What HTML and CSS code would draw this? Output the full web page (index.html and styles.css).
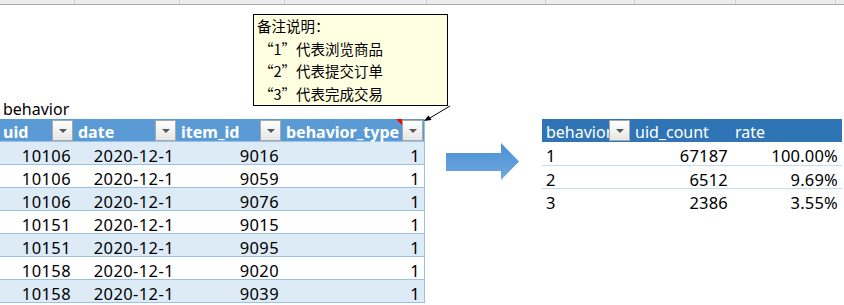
FILE: index.html
```html
<!DOCTYPE html>
<html lang="zh-CN">
<head>
<meta charset="utf-8">
<link rel="stylesheet" href="styles.css">
</head>
<body>
<div class="colbar">
  <span class="c" style="width:74px"></span>
  <span class="c" style="width:104px"></span>
  <span class="c" style="width:104px"></span>
  <span class="c" style="width:141px"></span>
  <span class="c" style="width:118px"></span>
  <span class="c" style="width:88px"></span>
  <span class="c" style="width:100px"></span>
  <span class="c" style="width:99px"></span>
</div>
<div class="sheet">
  <div class="comment">
    <div>备注说明：</div>
    <div class="ind">“1”代表浏览商品</div>
    <div class="ind">“2”代表提交订单</div>
    <div class="ind">“3”代表完成交易</div>
  </div>
  <svg class="leader" width="40" height="30" viewBox="0 0 40 30">
    <line x1="35" y1="2" x2="14" y2="14.5" stroke="#000" stroke-width="1"/>
    <polygon points="9,17 13.5,11.5 16.5,16" fill="#000"/>
  </svg>
  <div class="main">
    <div class="left">
      <div class="label">behavior</div>
      <div class="t1">
        <div class="row head">
          <div class="hc"><span class="ht">uid</span><span class="dd"></span></div>
          <div class="hc"><span class="ht">date</span><span class="dd"></span></div>
          <div class="hc"><span class="ht">item_id</span><span class="dd"></span></div>
          <div class="hc last"><span class="ht">behavior_type</span><span class="flag"></span><span class="dd"></span></div>
        </div>
        <div class="row band"><span>10106</span><span>2020-12-1</span><span>9016</span><span>1</span></div>
        <div class="row"><span>10106</span><span>2020-12-1</span><span>9059</span><span>1</span></div>
        <div class="row band"><span>10106</span><span>2020-12-1</span><span>9076</span><span>1</span></div>
        <div class="row"><span>10151</span><span>2020-12-1</span><span>9015</span><span>1</span></div>
        <div class="row band"><span>10151</span><span>2020-12-1</span><span>9095</span><span>1</span></div>
        <div class="row"><span>10158</span><span>2020-12-1</span><span>9020</span><span>1</span></div>
        <div class="row band"><span>10158</span><span>2020-12-1</span><span>9039</span><span>1</span></div>
      </div>
    </div>
    <svg class="bigarrow" width="74" height="40" viewBox="0 0 74 40">
      <defs>
        <linearGradient id="g" x1="0" y1="0" x2="0" y2="1">
          <stop offset="0" stop-color="#4d8ed0"/>
          <stop offset="1" stop-color="#6daae2"/>
        </linearGradient>
      </defs>
      <polygon points="0,11 55,11 55,1 73,19.5 55,38 55,29 0,29" fill="url(#g)"/>
    </svg>
    <div class="t2">
      <div class="r2 head2">
        <div class="hc2"><span class="ht2">behavior</span><span class="dd"></span></div>
        <div class="hc2"><span class="ht2">uid_count</span></div>
        <div class="hc2"><span class="ht2">rate</span></div>
      </div>
      <div class="r2"><span class="l">1</span><span>67187</span><span>100.00%</span></div>
      <div class="r2 sep"><span class="l">2</span><span>6512</span><span>9.69%</span></div>
      <div class="r2 sep"><span class="l">3</span><span>2386</span><span>3.55%</span></div>
    </div>
  </div>
</div>
</body>
</html>
```
FILE: styles.css
```css
html, body {
  margin: 0;
  padding: 0;
  background: #fff;
  width: 844px;
  height: 305px;
  overflow: hidden;
  font-family: "Noto Sans", "Noto Sans CJK SC", sans-serif;
  font-size: 16px;
  color: #000;
}

.colbar {
  display: flex;
  height: 4px;
  background: #ececec;
  border-bottom: 1px solid #a8a8a8;
}
.colbar .c {
  display: block;
  height: 4px;
  border-right: 1px solid #cfcfcf;
  flex: none;
}

.sheet {
  position: relative;
  padding-top: 95px;
}

.comment {
  position: absolute;
  left: 253px;
  top: 9px;
  width: 190px;
  height: 90px;
  background: #ffffe1;
  border: 1px solid #000;
  padding: 0 0 0 3px;
  font-family: "Noto Sans CJK SC", sans-serif;
  font-size: 14.5px;
  line-height: 22.5px;
}
.comment .ind { padding-left: 2px; }

.leader {
  position: absolute;
  left: 415px;
  top: 99px;
}

.main {
  display: flex;
  align-items: flex-start;
}

.label {
  height: 19px;
  line-height: 19px;
  padding-left: 3px;
}

.t1 {
  width: 424px;
  border-right: 1px solid #9bc2e6;
}

.row {
  display: grid;
  grid-template-columns: 75px 103px 105px 141px;
  height: 23px;
  box-sizing: border-box;
  border-bottom: 1px solid #9bc2e6;
  background: #fff;
}
.row.band { background: #ddebf7; }
.row > span {
  text-align: right;
  padding: 4px 4px 0 0;
  line-height: 19px;
  font-size: 16.5px;
  letter-spacing: 0.4px;
}
.row.head {
  background: #5b9bd5;
  border-bottom: 1px solid #9bc2e6;
}

.hc {
  position: relative;
  display: flex;
  align-items: flex-start;
  color: #fff;
  font-weight: bold;
}
.ht {
  padding: 4px 0 0 3px;
  line-height: 19px;
  white-space: nowrap;
  overflow: hidden;
  flex: 1;
  min-width: 0;
}
.dd {
  flex: none;
  width: 19px;
  height: 19px;
  margin: 1px 2px 0 0;
  border: 1px solid #a9a9a9;
  background: linear-gradient(#ffffff, #e6e6e6);
  position: relative;
}
.dd::after {
  content: "";
  position: absolute;
  left: 6px;
  top: 8px;
  border-left: 4px solid transparent;
  border-right: 4px solid transparent;
  border-top: 4px solid #595959;
}
.hc.last .dd { margin-right: 1px; }
.flag {
  position: absolute;
  right: 22px;
  top: 0;
  width: 0;
  height: 0;
  border-top: 6px solid #ff0000;
  border-left: 6px solid transparent;
}

.bigarrow {
  flex: none;
  margin: 42px 22px 0 21px;
}

.t2 {
  margin-top: 19px;
  width: 300px;
}
.r2 {
  display: grid;
  grid-template-columns: 90px 100px 110px;
  height: 23px;
  box-sizing: border-box;
}
.r2.sep { border-top: 1px solid #c6dcef; }
.r2 > span {
  text-align: right;
  padding: 4px 4px 0 0;
  line-height: 19px;
  font-size: 16.5px;
  letter-spacing: 0.2px;
}
.r2 > span.l {
  text-align: left;
  padding-left: 4px;
}
.head2 { background: #2f75b5; color: #fff; }
.hc2 {
  display: flex;
  align-items: flex-start;
}
.ht2 {
  padding: 4px 0 0 3px;
  line-height: 19px;
  white-space: nowrap;
  overflow: hidden;
  flex: 1;
  min-width: 0;
}
.hc2:first-child .ht2 { padding-left: 4px; }
```
